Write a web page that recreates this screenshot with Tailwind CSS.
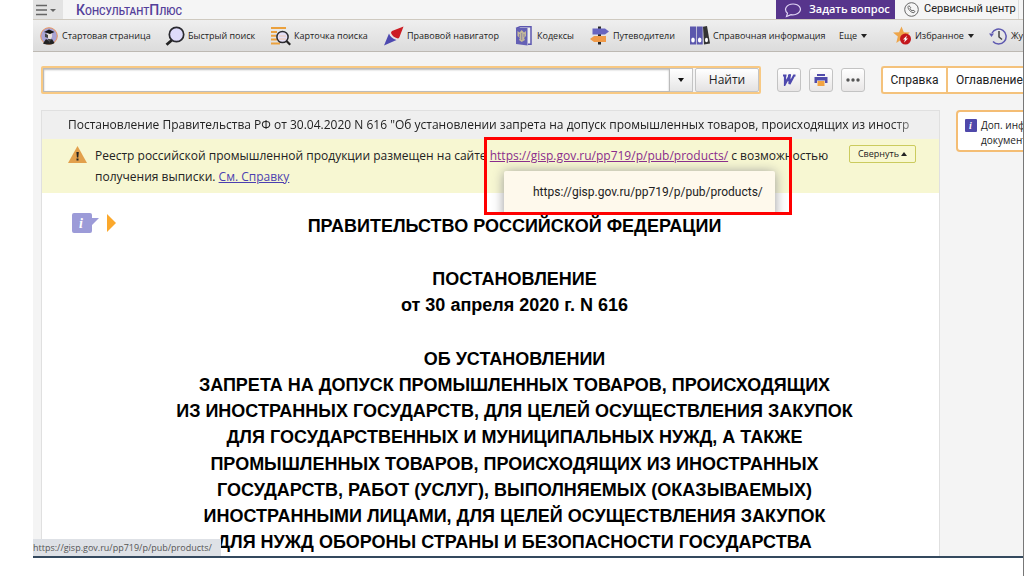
<!DOCTYPE html>
<html lang="ru">
<head>
<meta charset="utf-8">
<title>КонсультантПлюс</title>
<script src="https://cdn.jsdelivr.net/npm/@tailwindcss/browser@4"></script>
</head>
<body class="flex h-screen flex-col overflow-hidden border-r border-[#777] bg-white pb-[18px] pl-[33px] font-['Open_Sans','Noto_Sans',sans-serif] text-[#222]">
<div class="relative flex min-h-0 flex-1 flex-col overflow-hidden border-b-2 border-[#34495e] bg-[#f4f4f4]">

  <header class="flex h-[19px] shrink-0 items-stretch bg-[#f5f5f5]">
    <button aria-label="Меню" class="flex w-[30px] items-center bg-[#e3e3e3] pl-[3px]">
      <svg width="22" height="14" viewBox="0 0 22 14"><path d="M0 2.500h11M0 7h11M0 11.500h11" stroke="#666" stroke-width="1.600"/><path d="M14 6h6l-3 3z" fill="#666"/></svg>
    </button>
    <a href="#" class="ml-[13px] font-['Roboto',sans-serif] text-[14px] leading-[20px] font-medium text-[#54409a]">К<span class="text-[10px]">ОНСУЛЬТАНТ</span>П<span class="text-[10px]">ЛЮС</span></a>
    <button class="ml-auto flex w-[119px] shrink-0 items-center gap-[7px] bg-[#57358c] pl-[8px] text-[11px] font-semibold whitespace-nowrap text-white">
      <svg width="18" height="16" viewBox="0 0 18 16" fill="none" stroke="#e0d4f5" stroke-width="1.200"><path d="M3.500 11.200C-.7 7.500 2.500 2 9 2s9 4.800 6.300 8.200C13.500 12.500 9.500 13.200 7 12.600L2.500 14.500z"/></svg>
      Задать вопрос
    </button>
    <a href="#" class="flex w-[124px] shrink-0 items-center gap-[5px] border-r border-[#ddd] pl-[9px] font-['Roboto',sans-serif] text-[11px] whitespace-nowrap">
      <svg width="15" height="15" viewBox="0 0 15 15" fill="none" stroke="#666"><circle cx="7.500" cy="7.500" r="6.800"/><path d="M5 3.700 4 4.700c-.3 2.600 3.200 6.200 6 6l1-1.200-2-1.400-.9.700C7.200 8.400 6.300 7.400 6 6.600l.7-.9z"/></svg>
      Сервисный центр
    </a>
    <div class="w-[4px] shrink-0"></div>
  </header>

  <nav class="flex h-[33px] shrink-0 items-center overflow-hidden border-y border-t-[#cfcac0] border-b-[#bdb9b3] bg-linear-to-b from-[#efefef] to-[#dcdcdc] pl-[7px] text-[9px] whitespace-nowrap">
    <a href="#" class="flex w-[125px] shrink-0 items-center gap-[4px]">
      <svg width="18" height="18" viewBox="0 0 18 18"><circle cx="9" cy="9" r="8.300" fill="#a9a4d4" stroke="#e9955f"/><path d="M3 16.500 6 12l3 2 3-2 2.500 4C12 18 6 18 3 16.500z" fill="#222"/><path d="M7 6h5v4l-2 3-3-3z" fill="#e8e0dc"/><path d="M4 5 9 2.500 14.500 5 10 7z" fill="#151515"/><path d="M5 6.500 8 8v3l-3-1zM7.500 12l2 4 1.500-4z" fill="#444"/></svg>
      Стартовая страница
    </a>
    <a href="#" class="flex w-[106px] shrink-0 items-center gap-[3px]">
      <svg width="20" height="20" viewBox="0 0 20 20"><path d="M7 14 1.500 18.800" stroke="#222" stroke-width="2.800"/><circle cx="11.500" cy="8.500" r="7.200" fill="#dfdcfb" stroke="#2a2a30" stroke-width="1.700"/></svg>
      Быстрый поиск
    </a>
    <a href="#" class="flex w-[113px] shrink-0 items-center gap-[3px]">
      <svg width="20" height="20" viewBox="0 0 20 20"><path d="M0 2h15M0 6h6M0 9.700h5M0 13.500h6M0 17.500h9" stroke="#eba13e" stroke-width="2"/><circle cx="11.500" cy="11" r="5.600" fill="#e5dff5" stroke="#2b2b30" stroke-width="1.500"/><path d="M8 10h7M8 13h7" stroke="#f0c8b0"/><path d="m15.500 15 3.700 3.700" stroke="#222" stroke-width="2.200"/></svg>
      Карточка поиска
    </a>
    <a href="#" class="flex w-[131px] shrink-0 items-center gap-[3px]">
      <svg width="20" height="20" viewBox="0 0 20 20"><path d="M19.500.500 8 5q-1 1-1 2c1 3 4 5 7 5.500q1-.5 1.500-1.500z" fill="#cc1d24"/><path d="M5 7.500 0 19.500l12.500-5.500C9 13 6 10.500 5 7.500z" fill="#4d49b0"/></svg>
      Правовой навигатор
    </a>
    <a href="#" class="flex w-[75px] shrink-0 items-center gap-[5px]">
      <svg width="17" height="20" viewBox="0 0 17 20"><path d="M1 2.500 5 .8h11v17.400h-3" fill="#eee" stroke="#5c57b0" stroke-width="1.500"/><path d="M1 2h11.500v17.500L1 18z" fill="#6460b5"/><path d="m2.500 5 2 1.500L6.700 4 9 6.500 11 5v5l-2 2 1 2-3.300 2L4 14l1-2-2.500-2z" fill="#c3b79a"/><path d="M4.500 8v3m4.500-3v3M6.700 7v7" stroke="#82799f" stroke-width=".8"/></svg>
      Кодексы
    </a>
    <a href="#" class="flex w-[99px] shrink-0 items-center gap-[4px]">
      <svg width="19" height="19" viewBox="0 0 19 19"><path d="M9.500.500v18" stroke="#292929" stroke-width="3"/><path d="M2.500 2.500H15L19 5.500 15 8.500H2.500z" fill="#6865bf"/><path d="M16 10H4L0 13l4 3h12z" fill="#f09a48"/></svg>
      Путеводители
    </a>
    <a href="#" class="flex w-[150px] shrink-0 items-center gap-[3px] pl-[1px]">
      <svg class="shrink-0" width="20" height="19" viewBox="0 0 20 19"><path d="M0 .5h6v18H0zM6.700.5h6v18h-6z" fill="#5b57ad"/><path d="m13 .8 4-.8 3 17.500-6 1z" fill="#333"/><g fill="#fff"><ellipse cx="3" cy="14" rx="1.800" ry="2.500"/><ellipse cx="9.700" cy="14" rx="1.800" ry="2.500"/><ellipse cx="16.500" cy="14" rx="1.500" ry="2.300"/></g></svg>
      Справочная информация
    </a>
    <button class="flex shrink-0 items-center gap-[4px]">Еще <svg width="6" height="4" viewBox="0 0 6 4"><path d="M0 0h6L3 4z" fill="#222"/></svg></button>
    <div class="ml-auto flex shrink-0 items-center">
      <button class="flex w-[96px] items-center gap-[4px]">
        <svg width="18" height="19" viewBox="0 0 18 19"><path d="m8.500.500 2.300 5.700 6 .4-4.600 4 1.500 6-5.200-3.200L3.300 17l1.500-6.400L0 6.600l6-.4z" fill="#eea54a"/><circle cx="12.500" cy="13" r="5.500" fill="#c4161c"/><path d="m14 9.500-4 4h2l-1 3 4-4h-2z" fill="#fff"/></svg>
        Избранное <svg width="6" height="4" viewBox="0 0 6 4"><path d="M0 0h6L3 4z" fill="#222"/></svg>
      </button>
      <button class="flex w-[34px] items-center gap-[4px] overflow-hidden">
        <svg class="shrink-0" width="18" height="18" viewBox="0 0 18 18" fill="none" stroke="#5e59b0" stroke-width="1.500"><path d="M3 6A7.500 7.500 0 1 1 4 14.500"/><path d="M0 6.500h5L2.500 10z" fill="#5e59b0" stroke="none"/><path d="M10 4v6l3 2.500" stroke="#444"/></svg>
        Журнал
      </button>
    </div>
  </nav>

  <div class="flex shrink-0 items-center pt-[14px] pl-[8px]">
    <form class="flex h-[28px] min-w-0 flex-1 items-stretch rounded-[2px] border-2 border-[#f8c983]">
      <input type="text" aria-label="Поиск" class="min-w-0 flex-1 border border-[#bbb] bg-white px-2 text-[13px] shadow-[inset_0_1px_2px_#bbb] outline-none">
      <button type="button" aria-label="Варианты" class="flex w-[23px] items-center justify-center border-y border-r border-[#c4c4c4] bg-linear-to-b from-white to-[#e6e6e6]"><svg width="6" height="4" viewBox="0 0 6 4"><path d="M0 0h6L3 4z" fill="#111"/></svg></button>
      <button type="button" class="ml-[2px] w-[64px] rounded-[2px] border border-[#c4c4c4] bg-linear-to-b from-white to-[#e4e2e2] text-[12px]">Найти</button>
    </form>
    <div class="ml-[16px] flex shrink-0 gap-[8px]">
      <button aria-label="Экспорт в Word" class="flex size-[24px] items-center justify-center rounded-[3px] border border-[#c3c3c3] bg-linear-to-b from-white to-[#e8e6e6]"><svg width="14" height="12" viewBox="0 0 14 12"><path d="M1 1.500h3.500M6 1.500h3M3 1.500V10l4.500-8V10L12 1.500h1.500" fill="none" stroke="#4e49ae" stroke-width="2.200"/></svg></button>
      <button aria-label="Печать" class="flex size-[24px] items-center justify-center rounded-[3px] border border-[#c3c3c3] bg-linear-to-b from-white to-[#e8e6e6]"><svg width="14" height="14" viewBox="0 0 14 14"><path d="M3 1h8v2H3zM.5 4h13v6H11V7.500H3V10H.5z" fill="#514cab"/><path d="M3.500 8h7v5h-7z" fill="#f2a443"/></svg></button>
      <button aria-label="Ещё действия" class="flex size-[24px] items-center justify-center rounded-[3px] border border-[#c3c3c3] bg-linear-to-b from-white to-[#e8e6e6]"><svg width="14" height="4" viewBox="0 0 14 4" fill="#555"><circle cx="2" cy="2" r="1.700"/><circle cx="7" cy="2" r="1.700"/><circle cx="12" cy="2" r="1.700"/></svg></button>
    </div>
    <div class="ml-[16px] flex h-[28px] w-[142px] shrink-0 overflow-hidden rounded-l-[3px] border-2 border-r-0 border-[#f4c27c] bg-white font-['Roboto',sans-serif] text-[12px] whitespace-nowrap">
      <button class="w-[65px] shrink-0 border-r-2 border-[#f4c27c]">Справка</button>
      <button class="shrink-0 pl-[8px]">Оглавление</button>
    </div>
  </div>

  <div class="flex min-h-0 flex-1 pt-[16px] pl-[8px]">
    <main class="min-w-0 flex-1 overflow-hidden border border-b-0 border-[#e0e0e0] bg-white">
      <div class="h-[28px] overflow-hidden bg-[#efefef] pr-[5px] pl-[26px] text-[12px] leading-[27px] whitespace-nowrap">
        <div class="overflow-hidden mask-r-from-95%">Постановление Правительства РФ от 30.04.2020 N 616 "Об установлении запрета на допуск промышленных товаров, происходящих из иностр</div>
      </div>
      <section class="relative flex h-[54px] items-start bg-[#f7f7d2] pt-[6px] pl-[26px]">
        <svg class="mt-[1px] shrink-0" width="19" height="17" viewBox="0 0 19 17"><path d="M9.500 0 19 17H0z" fill="#e2a04c"/><path d="M8.400 6h2.400l-.5 5.500H8.900zM8.500 12.500h2v2h-2z" fill="#222"/></svg>
        <p class="ml-[8px] w-[754px] text-[12px] leading-[21px] whitespace-nowrap">Реестр российской промышленной продукции размещен на сайте <a href="#" class="text-[#8a2d8c] underline">https://gisp.gov.ru/pp719/p/pub/products/</a> с возможностью<br>получения выписки. <a href="#" class="text-[#4b3fb0] underline">См. Справку</a></p>
        <button class="flex h-[18px] w-[67px] shrink-0 items-center justify-center gap-[2px] rounded-[2px] border border-[#cbcb5e] bg-[#f8f8d0] text-[9px]">Свернуть <svg width="6" height="4" viewBox="0 0 6 4"><path d="M0 4h6L3 0z" fill="#222"/></svg></button>
        <div class="absolute -top-[2px] left-[442px] z-10 h-[78px] w-[308px] overflow-hidden border-3 border-[#f00]">
          <div class="mt-[31px] ml-[17px] h-[50px] w-[271px] rounded-[2px] bg-[#fef9ec] pl-[29px] font-['Roboto',sans-serif] text-[12px] leading-[42px] whitespace-nowrap shadow-[0_1px_12px_#999]">https://gisp.gov.ru/pp719/p/pub/products/</div>
        </div>
      </section>
      <div class="flex items-start pt-[20px] pl-[30px]">
        <div class="flex w-0 shrink-0 gap-[8px]">
          <svg class="shrink-0" width="27" height="20" viewBox="0 0 27 20"><path d="M2 0h16q2 0 2 2v3h7l-7 7v6q0 2-2 2H2q-2 0-2-2V2Q0 0 2 0z" fill="#9c9bd8"/><text x="7" y="15" font-family="Liberation Serif" font-style="italic" font-weight="bold" font-size="14" fill="#fff">i</text></svg>
          <svg class="shrink-0" width="10" height="20" viewBox="0 0 10 20"><path d="M0 1v18l9-9z" fill="#fba82c"/></svg>
        </div>
        <article class="w-full pl-[18px] text-center font-['Liberation_Sans','Arial',sans-serif] text-[18px] leading-[26px] font-bold whitespace-nowrap text-black">
          <p>ПРАВИТЕЛЬСТВО РОССИЙСКОЙ ФЕДЕРАЦИИ</p>
          <p class="mt-[27px]">ПОСТАНОВЛЕНИЕ<br>от 30 апреля 2020 г. N 616</p>
          <p class="mt-[28px]">ОБ УСТАНОВЛЕНИИ<br>ЗАПРЕТА НА ДОПУСК ПРОМЫШЛЕННЫХ ТОВАРОВ, ПРОИСХОДЯЩИХ<br>ИЗ ИНОСТРАННЫХ ГОСУДАРСТВ, ДЛЯ ЦЕЛЕЙ ОСУЩЕСТВЛЕНИЯ ЗАКУПОК<br>ДЛЯ ГОСУДАРСТВЕННЫХ И МУНИЦИПАЛЬНЫХ НУЖД, А ТАКЖЕ</p>
          <p class="mt-[1px]">ПРОМЫШЛЕННЫХ ТОВАРОВ, ПРОИСХОДЯЩИХ ИЗ ИНОСТРАННЫХ<br>ГОСУДАРСТВ, РАБОТ (УСЛУГ), ВЫПОЛНЯЕМЫХ (ОКАЗЫВАЕМЫХ)<br>ИНОСТРАННЫМИ ЛИЦАМИ, ДЛЯ ЦЕЛЕЙ ОСУЩЕСТВЛЕНИЯ ЗАКУПОК<br>ДЛЯ НУЖД ОБОРОНЫ СТРАНЫ И БЕЗОПАСНОСТИ ГОСУДАРСТВА</p>
        </article>
      </div>
    </main>
    <aside class="ml-[16px] w-[67px] shrink-0 overflow-hidden">
      <a href="#" class="flex h-[42px] w-[160px] gap-[4px] rounded-[4px] border-2 border-[#f4bd74] bg-white pt-[6px] pl-[7px] text-[10px] leading-[15px] whitespace-nowrap">
        <svg class="mt-[1px] shrink-0" width="12" height="13" viewBox="0 0 12 13"><rect width="12" height="13" rx="1" fill="#4f48aa"/><text x="4" y="10" font-family="Liberation Serif" font-style="italic" font-weight="bold" font-size="10" fill="#fff">i</text></svg>
        <span>Доп. информация<br>документу</span>
      </a>
    </aside>
  </div>

  <div class="absolute bottom-0 left-0 h-[17px] w-[188px] bg-[#dee1e6] text-[9px] leading-[18px] whitespace-nowrap text-[#555]">https://gisp.gov.ru/pp719/p/pub/products/</div>
</div>
</body>
</html>
